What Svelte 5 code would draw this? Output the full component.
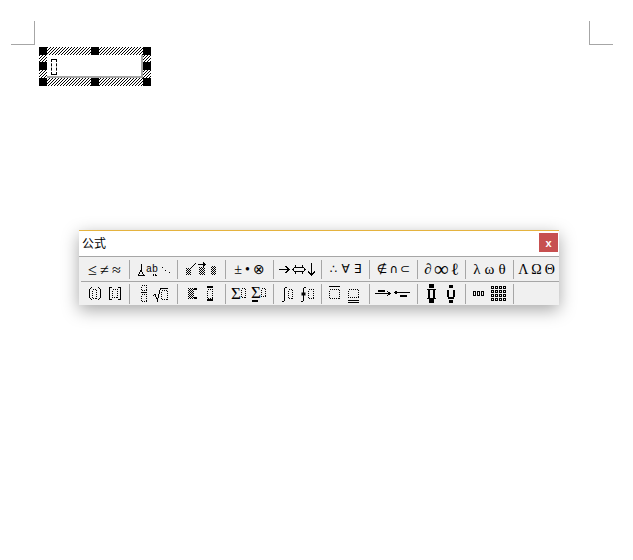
<script>
  const handles = [
    [0, 0], [52, 0], [104, 0],
    [0, 15], [104, 15],
    [0, 31], [52, 31], [104, 31]
  ];

  const symbolGroups = {
    0: ['≤', '≠', '≈'],
    3: ['±', '•', '⊗'],
    5: ['∴', '∀', '∃'],
    6: ['∉', '∩', '⊂'],
    7: ['∂', '∞', 'ℓ'],
    8: ['λ', 'ω', 'θ'],
    9: ['Λ', 'Ω', 'Θ']
  };

  const gridDots = [];
  for (let r = 0; r < 4; r++) {
    for (let c = 0; c < 4; c++) gridDots.push([491.5 + c * 4, 286.5 + r * 4]);
  }
</script>

{#snippet box(x, y, w, h)}
  <rect {x} {y} width={w} height={h} class="dots" />
{/snippet}

{#snippet solid(x, y, w, h)}
  <rect {x} {y} width={w} height={h} class="stroke" />
{/snippet}

{#snippet shade(x, y, w, h)}
  <rect {x} {y} width={w} height={h} fill="url(#checker)" />
{/snippet}

{#snippet bar(x, y, w, h)}
  <rect {x} {y} width={w} height={h} fill="#000" />
{/snippet}

{#snippet ln(d)}
  <path {d} class="stroke" />
{/snippet}

<svg class="defs" width="0" height="0" aria-hidden="true">
  <defs>
    <pattern id="checker" width="2" height="2" patternUnits="userSpaceOnUse">
      <rect width="1" height="1" fill="#000" />
      <rect x="1" y="1" width="1" height="1" fill="#000" />
    </pattern>
    <pattern id="hatch" width="3" height="3" patternUnits="userSpaceOnUse">
      <rect x="0" y="2" width="1" height="1" fill="#000" />
      <rect x="1" y="1" width="1" height="1" fill="#000" />
      <rect x="2" y="0" width="1" height="1" fill="#000" />
    </pattern>
  </defs>
</svg>

<div class="page">
  <div class="marks">
    <div class="mark left"></div>
    <div class="mark right"></div>
  </div>

  <div class="frame">
    <svg class="hatching" width="112" height="39" aria-hidden="true">
      <rect width="112" height="39" fill="url(#hatch)" />
    </svg>
    <div class="editor">
      <div class="slot"></div>
    </div>
    {#each handles as [x, y]}
      <span class="handle" style="left: {x}px; top: {y}px"></span>
    {/each}
  </div>

  <div class="toolbar">
    <div class="titlebar">
      <span class="title">公式</span>
      <button class="close">x</button>
    </div>

    <div class="row first">
      {#each Array(10) as _, i}
        <div class="cell g{i}" class:last={i === 9}>
          {#if symbolGroups[i]}
            {#each symbolGroups[i] as s}
              <span class="sym" class:inf={s === '∞'} class:ell={s === 'ℓ'}>{s}</span>
            {/each}
          {:else if i === 1}
            <svg width="47" height="19" viewBox="130 260 47 19">
              {@render ln('M141.5 264 V270')}
              {@render ln('M141 270 L138.5 275.5 H144 Z')}
              <text x="146" y="272" class="ab">ab</text>
              {@render box(152.5, 274.5, 4, 1)}
              {@render bar(162, 267, 1, 1)}
              {@render bar(165, 270, 1, 1)}
              {@render bar(169, 272, 1, 1)}
            </svg>
          {:else if i === 2}
            <svg width="47" height="19" viewBox="178 260 47 19">
              {@render shade(186, 268, 5, 7)}
              {@render ln('M190.5 268.5 L195.5 263.5')}
              {@render shade(199, 267, 6, 8)}
              {@render ln('M198 264.5 H205 M203 262.5 L205 264.5 L203 266.5')}
              {@render shade(211, 266, 5, 9)}
            </svg>
          {:else}
            <svg width="47" height="19" viewBox="274 260 47 19">
              {@render ln('M279 269.5 H289 M285.5 266 L289 269.5 L285.5 273')}
              {@render ln('M295 267.5 H303 M295 271.5 H303 M296 265.5 L293 269.5 L296 273.5 M302 265.5 L305 269.5 L302 273.5')}
              {@render ln('M311.5 263 V275 M308 271.5 L311.5 275 L315 271.5')}
            </svg>
          {/if}
        </div>
      {/each}
    </div>

    <div class="hr"></div>

    <div class="row second">
      <div class="cell">
        <svg width="47" height="20" viewBox="82 284 47 20">
          {@render ln('M91.5 287 L89.5 290 V297 L91.5 300 M98.5 287 L100.5 290 V297 L98.5 300')}
          {@render box(92.5, 289.5, 4, 9)}
          {@render ln('M112 287.5 H109.5 V299.5 H112 M118 287.5 H120.5 V299.5 H118')}
          {@render box(112.5, 289.5, 5, 8)}
        </svg>
      </div>
      <div class="cell">
        <svg width="47" height="20" viewBox="130 284 47 20">
          {@render box(141.5, 285.5, 5, 5)}
          {@render ln('M141 292.5 H147')}
          {@render box(141.5, 294.5, 5, 7)}
          {@render ln('M153 295.5 L155 294.5 L157.5 300.5 L160.5 288.5 H168')}
          {@render box(161.5, 290.5, 6, 9)}
        </svg>
      </div>
      <div class="cell">
        <svg width="47" height="20" viewBox="178 284 47 20">
          {@render shade(188, 288, 6, 11)}
          {@render bar(194, 288, 3, 2)}
          {@render bar(194, 297, 3, 2)}
          {@render bar(207, 286, 6, 2)}
          {@render box(207.5, 289.5, 5, 9)}
          {@render bar(207, 299, 6, 2)}
        </svg>
      </div>
      <div class="cell">
        <svg width="47" height="20" viewBox="226 284 47 20">
          <text x="231" y="299" class="sigma">Σ</text>
          {@render box(241.5, 288.5, 4, 9)}
          <text x="251" y="298" class="sigma">Σ</text>
          {@render bar(252, 300, 6, 2)}
          {@render box(261.5, 288.5, 4, 8)}
        </svg>
      </div>
      <div class="cell">
        <svg width="47" height="20" viewBox="274 284 47 20">
          {@render ln('M286.5 287.5 H285.5 L284.5 289 V300 L283.5 301.5 H282')}
          {@render box(288.5, 289.5, 4, 9)}
          {@render ln('M305.5 287.5 H304.5 L303.5 289 V300 L302.5 301.5 H301')}
          <rect x="301.5" y="292.5" width="4" height="3" fill="#000" />
          {@render box(308.5, 289.5, 5, 9)}
        </svg>
      </div>
      <div class="cell">
        <svg width="47" height="20" viewBox="322 284 47 20">
          {@render ln('M329 286.5 H340')}
          {@render box(329.5, 289.5, 10, 9)}
          {@render box(348.5, 289.5, 10, 8)}
          {@render ln('M348 300.5 H359 M348 302.5 H359')}
        </svg>
      </div>
      <div class="cell">
        <svg width="47" height="20" viewBox="370 284 47 20">
          {@render bar(378, 290, 7, 2)}
          {@render ln('M375 293.5 H390 M387.5 291.5 L390 293.5 L387.5 295.5')}
          {@render ln('M395 292.5 H410 M397.5 290.5 L395 292.5 L397.5 294.5')}
          {@render bar(400, 295, 7, 2)}
        </svg>
      </div>
      <div class="cell">
        <svg width="47" height="20" viewBox="418 284 47 20">
          {@render bar(429, 284, 5, 4)}
          {@render bar(427, 289, 9, 1)}
          {@render bar(428, 290, 2, 8)}
          {@render bar(433, 290, 2, 8)}
          {@render bar(427, 298, 9, 1)}
          {@render bar(429, 299, 5, 4)}
          {@render bar(449, 285, 4, 3)}
          {@render bar(447, 290, 2, 7)}
          {@render bar(453, 290, 2, 7)}
          {@render bar(448, 297, 6, 2)}
          {@render bar(449, 300, 4, 3)}
        </svg>
      </div>
      <div class="cell">
        <svg width="47" height="20" viewBox="466 284 47 20">
          {@render solid(473.5, 291.5, 2, 4)}
          {@render solid(477.5, 291.5, 2, 4)}
          {@render solid(481.5, 291.5, 2, 4)}
          {#each gridDots as [x, y]}
            {@render solid(x, y, 2, 2)}
          {/each}
        </svg>
      </div>
      <div class="cell last"></div>
    </div>
  </div>
</div>

<style>
  :global(body) {
    margin: 0;
    background: #fff;
  }

  .defs {
    position: absolute;
  }

  .page {
    position: relative;
    height: 560px;
    overflow: hidden;
    padding-top: 21px;
    box-sizing: border-box;
    background: #fff;
  }

  .marks {
    display: flex;
    justify-content: space-between;
    padding: 0 20px 0 11px;
  }

  .mark {
    width: 23px;
    height: 23px;
    border-bottom: 1px solid #a6a6a6;
  }

  .mark.left {
    border-right: 1px solid #a6a6a6;
  }

  .mark.right {
    border-left: 1px solid #a6a6a6;
  }

  .frame {
    position: relative;
    width: 112px;
    height: 39px;
    margin: 2px 0 0 39px;
  }

  .hatching {
    position: absolute;
    left: 0;
    top: 0;
  }

  .editor {
    box-sizing: border-box;
    height: 23px;
    margin: 0 8px;
    position: relative;
    top: 8px;
    padding: 4px;
    background: #fff;
    border-right: 2px solid #a6a6a6;
    border-bottom: 2px solid #a6a6a6;
  }

  .slot {
    box-sizing: border-box;
    width: 6px;
    height: 16px;
    border: 1px dashed #000;
  }

  .handle {
    position: absolute;
    width: 8px;
    height: 8px;
    background: #000;
  }

  .toolbar {
    position: absolute;
    left: 79px;
    top: 230px;
    width: 480px;
    height: 75px;
    background: #f0f0f0;
    border-top: 1px solid #e5b33f;
    box-sizing: border-box;
    box-shadow: 0 5px 16px rgba(0, 0, 0, 0.35);
  }

  .titlebar {
    display: flex;
    align-items: center;
    justify-content: space-between;
    box-sizing: border-box;
    height: 26px;
    padding: 0 1px 2px 3px;
    background: #fff;
    border-bottom: 1px solid #a6a6a6;
  }

  .title {
    font: 12px "Noto Sans CJK SC", "Noto Sans", sans-serif;
    color: #000;
  }

  .close {
    width: 19px;
    height: 19px;
    padding: 0;
    border: none;
    background: #c75050;
    color: #fff;
    font: bold 11px "Liberation Sans", sans-serif;
  }

  .row {
    display: flex;
    align-items: flex-start;
    padding-left: 3px;
  }

  .first {
    height: 24px;
    padding-top: 3px;
    box-sizing: border-box;
  }

  .second {
    padding-top: 1px;
  }

  .hr {
    height: 1px;
    margin: 0 0 1px 2px;
    background: #a6a6a6;
  }

  .cell {
    display: flex;
    align-items: center;
    justify-content: center;
    gap: 3px;
    box-sizing: border-box;
    flex: none;
    width: 48px;
    border-right: 1px solid #a6a6a6;
  }

  .first .cell {
    height: 19px;
  }

  .second .cell {
    height: 20px;
  }

  .cell.last {
    width: 45px;
    border-right: none;
  }

  .sym {
    font: 13px/19px "Liberation Serif", "DejaVu Sans", serif;
    color: #000;
  }

  .g0 {
    gap: 2px;
    padding-right: 2px;
  }

  .g0 .sym {
    font-size: 16px;
    width: 10px;
    text-align: center;
  }

  .g3 .sym {
    font-size: 14px;
  }

  .g5 {
    gap: 4px;
  }

  .g5 .sym {
    font-size: 12px;
  }

  .g6 {
    gap: 2px;
  }

  .g6 .sym {
    font: 12px/19px "DejaVu Sans", sans-serif;
  }

  .g7 {
    gap: 2px;
  }

  .g7 .sym {
    font-size: 15px;
  }

  .sym.inf {
    font-size: 21px;
  }

  .sym.ell {
    font-size: 17px;
  }

  .g8 {
    gap: 4px;
  }

  .g8 .sym {
    font-size: 15px;
  }

  .g9 .sym {
    font-size: 14px;
  }

  svg {
    display: block;
    flex: none;
  }

  .dots {
    fill: none;
    stroke: #000;
    stroke-width: 1;
    stroke-dasharray: 1 1;
    shape-rendering: crispEdges;
  }

  .stroke {
    fill: none;
    stroke: #000;
    stroke-width: 1;
    shape-rendering: crispEdges;
  }

  .ab {
    font: 10px "Liberation Mono", monospace;
    fill: #000;
  }

  .sigma {
    font: 17px "Liberation Serif", serif;
    fill: #000;
  }
</style>
